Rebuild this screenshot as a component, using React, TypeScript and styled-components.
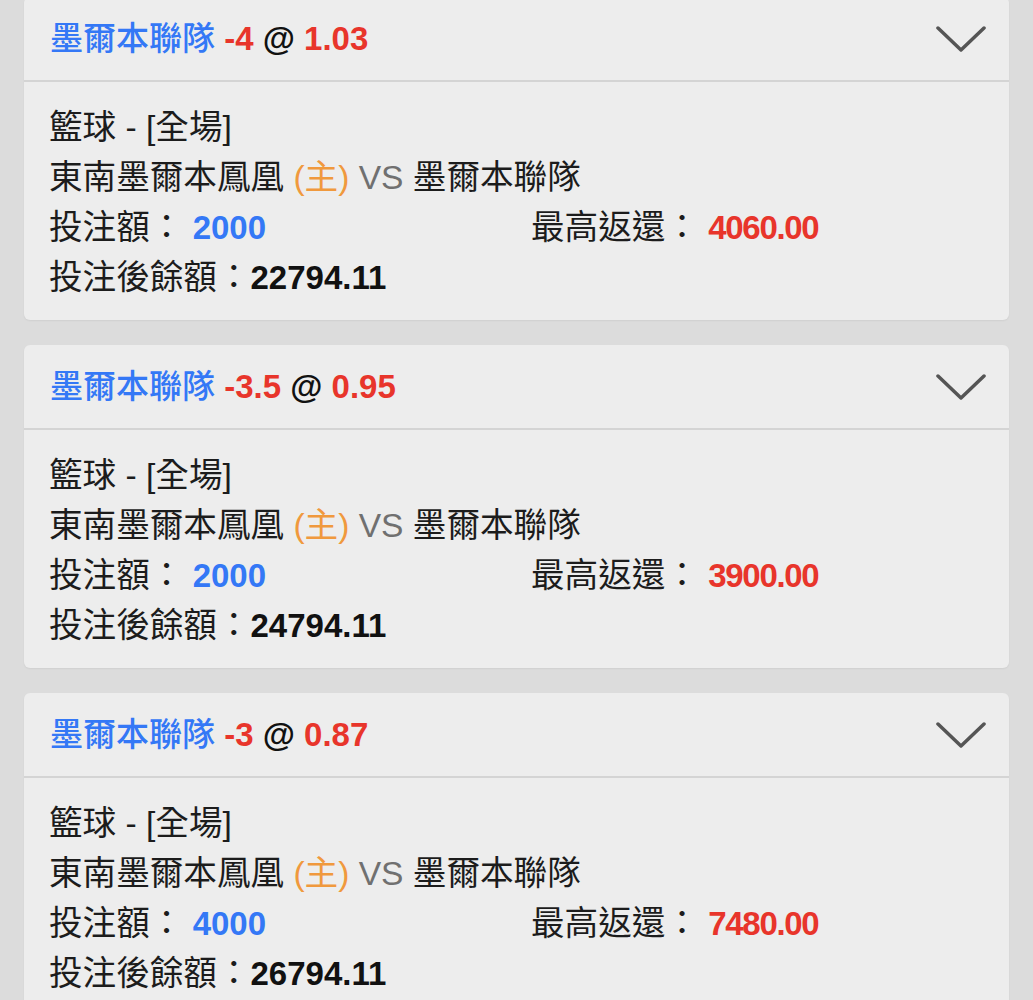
import styled, { createGlobalStyle } from 'styled-components';

const GlobalStyle = createGlobalStyle`
  html, body {
    margin: 0;
    padding: 0;
    background: #dcdcdc;
  }
  body {
    font-family: "Liberation Sans", "Noto Sans CJK TC", sans-serif;
    color: #1c1c1c;
  }
`;

const Page = styled.div`
  padding: 0 24px 40px 24px;
  margin-top: -3px;
  display: flex;
  flex-direction: column;
  gap: 25px;
`;

const Card = styled.section`
  background: #ededed;
  border-radius: 6px;
  box-shadow: 0 1px 2px rgba(0, 0, 0, 0.06);
  overflow: hidden;
`;

const Header = styled.header`
  height: 83px;
  display: flex;
  align-items: center;
  justify-content: space-between;
  padding: 0 23px 0 26px;
  border-bottom: 2px solid #d4d4d4;
`;

const Title = styled.div`
  font-size: 33px;
  line-height: 40px;
  white-space: nowrap;
`;

const Team = styled.span`
  color: #3478f6;
  font-weight: 500;
`;

const Num = styled.span<{ $tone?: 'red' | 'blue' | 'dark'; $tight?: boolean }>`
  font-weight: 700;
  font-size: 33px;
  letter-spacing: ${(p) => (p.$tight ? '-1.3px' : '0')};
  color: ${(p) =>
    p.$tone === 'red' ? '#e8352b' : p.$tone === 'blue' ? '#3478f6' : '#111'};
`;

const Body = styled.div`
  padding: 21px 26px 17px 25px;
  font-size: 33.6px;
  line-height: 50px;
`;

const Line = styled.div`
  white-space: nowrap;
`;

const Row = styled.div`
  display: grid;
  grid-template-columns: 482px 1fr;
  white-space: nowrap;
`;

const Home = styled.span`
  color: #f0993d;
`;

const Vs = styled.span`
  color: #707070;
`;

function Chevron() {
  return (
    <svg width="50" height="28" viewBox="0 0 50 28">
      <polyline
        points="2,3 25,25 48,3"
        fill="none"
        stroke="#555"
        strokeWidth="3.5"
        strokeLinecap="round"
        strokeLinejoin="round"
      />
    </svg>
  );
}

type Bet = {
  handicap: string;
  odds: string;
  stake: string;
  maxReturn: string;
  balance: string;
};

const bets: Bet[] = [
  { handicap: '-4', odds: '1.03', stake: '2000', maxReturn: '4060.00', balance: '22794.11' },
  { handicap: '-3.5', odds: '0.95', stake: '2000', maxReturn: '3900.00', balance: '24794.11' },
  { handicap: '-3', odds: '0.87', stake: '4000', maxReturn: '7480.00', balance: '26794.11' },
];

function BetCard({ bet }: { bet: Bet }) {
  return (
    <Card>
      <Header>
        <Title>
          <Team>墨爾本聯隊</Team> <Num $tone="red">{bet.handicap}</Num>{' '}
          <Num $tone="dark">@</Num> <Num $tone="red">{bet.odds}</Num>
        </Title>
        <Chevron />
      </Header>
      <Body>
        <Line>籃球 - [全場]</Line>
        <Line>
          東南墨爾本鳳凰 <Home>(主)</Home> <Vs>VS</Vs> 墨爾本聯隊
        </Line>
        <Row>
          <span>
            投注額： <Num $tone="blue">{bet.stake}</Num>
          </span>
          <span>
            最高返還： <Num $tone="red" $tight>{bet.maxReturn}</Num>
          </span>
        </Row>
        <Line>
          投注後餘額：<Num $tone="dark">{bet.balance}</Num>
        </Line>
      </Body>
    </Card>
  );
}

export default function App() {
  return (
    <>
      <GlobalStyle />
      <Page>
        {bets.map((b) => (
          <BetCard key={b.balance} bet={b} />
        ))}
      </Page>
    </>
  );
}
